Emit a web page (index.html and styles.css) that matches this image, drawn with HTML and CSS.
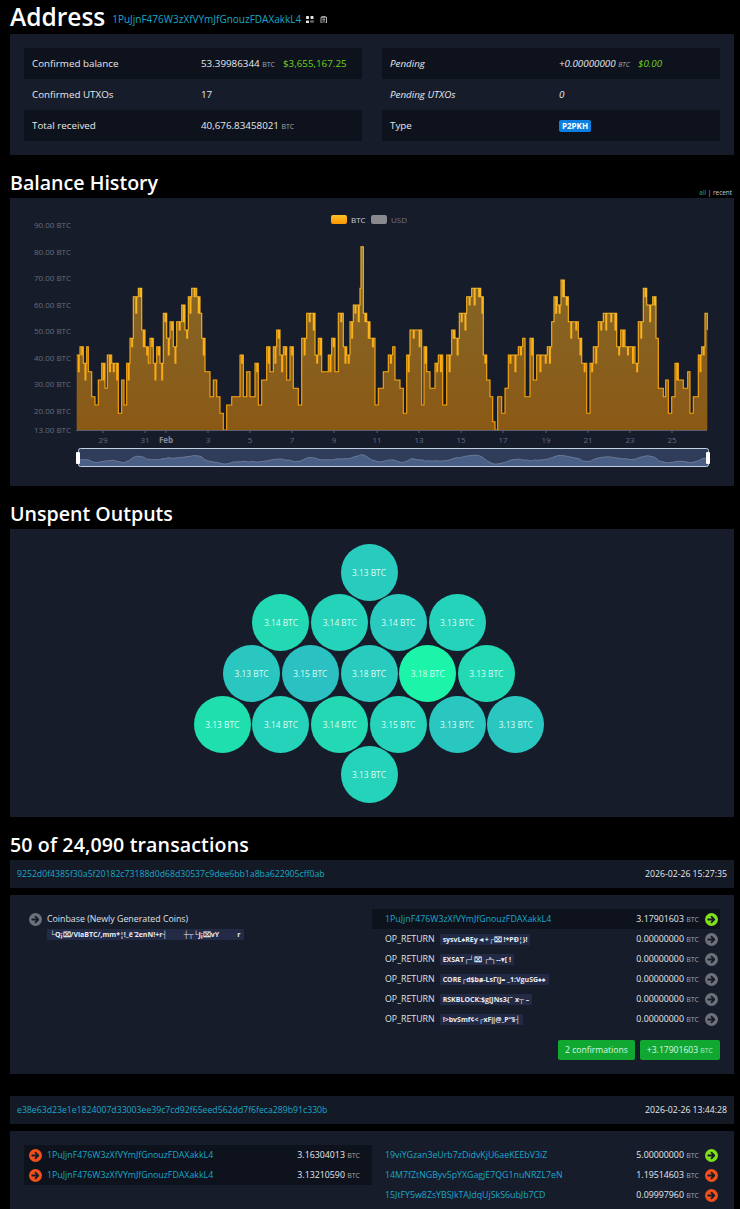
FILE: index.html
```html
<!DOCTYPE html>
<html lang="en">
<head>
    <meta charset="UTF-8">
    <meta name="viewport" content="width=device-width, initial-scale=1.0">
    <title>Address 1PuJjnF476W3zXfVYmJfGnouzFDAXakkL4</title>
    <link rel="stylesheet" href="styles.css">
</head>
<body>
    <svg class="icon-defs" aria-hidden="true">
        <symbol id="arrow" viewBox="0 0 16 16">
            <circle cx="8" cy="8" r="8" fill="currentColor"/>
            <path d="M4 8h7M8 4.6 11.4 8 8 11.4" fill="none" stroke="#171c2b" stroke-width="2.2" stroke-linecap="round" stroke-linejoin="round"/>
        </symbol>
    </svg>

    <!-- Address summary -->
    <div class="title-row">
        <h1>Address</h1>
        <a class="link title-address">1PuJjnF476W3zXfVYmJfGnouzFDAXakkL4</a>
        <svg class="title-icon qr" viewBox="0 0 10 10">
            <path d="M0 1a1 1 0 0 1 1-1h2a1 1 0 0 1 1 1v2a1 1 0 0 1-1 1H1a1 1 0 0 1-1-1zM6 1a1 1 0 0 1 1-1h2a1 1 0 0 1 1 1v2a1 1 0 0 1-1 1H7a1 1 0 0 1-1-1zM0 7a1 1 0 0 1 1-1h2a1 1 0 0 1 1 1v2a1 1 0 0 1-1 1H1a1 1 0 0 1-1-1zM6 6h1.5v1.5H6zM8.5 6H10v1.5H8.5zM6 8.5h1.5V10H6zM8.5 8.5H10V10H8.5z" fill="#e4e6ea"/>
        </svg>
        <svg class="title-icon copy" viewBox="0 0 10 11">
            <path d="M2.5 1.5H1v9h8v-9H7.5M3 .6h4v2H3zM3 5h4M3 7.4h4" fill="none" stroke="#e4e6ea" stroke-width="1.1"/>
        </svg>
    </div>
    <section class="panel summary">
        <div class="info-table">
            <div class="info-row shaded">
                <span class="info-label">Confirmed balance</span>
                <span>53.39986344 <small>BTC</small><b class="usd">$3,655,167.25</b></span>
            </div>
            <div class="info-row">
                <span class="info-label">Confirmed UTXOs</span>
                <span>17</span>
            </div>
            <div class="info-row shaded">
                <span class="info-label">Total received</span>
                <span>40,676.83458021 <small>BTC</small></span>
            </div>
        </div>
        <div class="info-table">
            <div class="info-row shaded pending">
                <span class="info-label">Pending</span>
                <span>+0.00000000 <small>BTC</small><b class="usd">$0.00</b></span>
            </div>
            <div class="info-row pending">
                <span class="info-label">Pending UTXOs</span>
                <span>0</span>
            </div>
            <div class="info-row shaded">
                <span class="info-label">Type</span>
                <span class="badge">P2PKH</span>
            </div>
        </div>
    </section>

    <!-- Balance history -->
    <div class="section-head">
        <h2>Balance History</h2>
        <span class="range"><a class="link">all</a> | recent</span>
    </div>
    <section class="panel chart-panel">
        <svg class="chart" viewBox="10 198 724 288">
            <defs>
                <linearGradient id="lineGrad" gradientUnits="userSpaceOnUse" x1="0" y1="250" x2="0" y2="430">
                    <stop offset="0" stop-color="#f6c030"/>
                    <stop offset="1" stop-color="#ffa000"/>
                </linearGradient>
                <linearGradient id="areaGrad" gradientUnits="userSpaceOnUse" x1="0" y1="250" x2="0" y2="430">
                    <stop offset="0" stop-color="#f0b428" stop-opacity="0.5"/>
                    <stop offset="1" stop-color="#ff9600" stop-opacity="0.5"/>
                </linearGradient>
                <linearGradient id="swatchGrad" x1="0" y1="0" x2="0" y2="1">
                    <stop offset="0" stop-color="#fbc02d"/>
                    <stop offset="1" stop-color="#ff9800"/>
                </linearGradient>
            </defs>

            <rect class="swatch" x="331" y="215" width="16" height="9" rx="2" fill="url(#swatchGrad)"/>
            <text class="legend-on" x="351" y="223">BTC</text>
            <rect class="swatch" x="371" y="215" width="16" height="9" rx="2" fill="#8a8a8e"/>
            <text class="legend-off" x="391" y="223">USD</text>

            <g class="axis-y">
                <text x="71" y="228">90.00 BTC</text>
                <text x="71" y="255">80.00 BTC</text>
                <text x="71" y="281">70.00 BTC</text>
                <text x="71" y="308">60.00 BTC</text>
                <text x="71" y="334">50.00 BTC</text>
                <text x="71" y="361">40.00 BTC</text>
                <text x="71" y="387">30.00 BTC</text>
                <text x="71" y="414">20.00 BTC</text>
                <text x="71" y="433">13.00 BTC</text>
            </g>

            <path id="area" fill="url(#areaGrad)"/>
            <path id="line" fill="none" stroke="url(#lineGrad)" stroke-width="1.1"/>
            <path class="axis-line" d="M76 430.5H707M103 430v3M145 430v3M166 430v3M208 430v3M250 430v3M292 430v3M334 430v3M377 430v3M419 430v3M461 430v3M503 430v3M546 430v3M588 430v3M630 430v3M672 430v3"/>

            <g class="axis-x">
                <text x="103" y="443">29</text>
                <text x="145" y="443">31</text>
                <text class="month" x="166" y="443">Feb</text>
                <text x="208" y="443">3</text>
                <text x="250" y="443">5</text>
                <text x="292" y="443">7</text>
                <text x="334" y="443">9</text>
                <text x="377" y="443">11</text>
                <text x="419" y="443">13</text>
                <text x="461" y="443">15</text>
                <text x="503" y="443">17</text>
                <text x="546" y="443">19</text>
                <text x="588" y="443">21</text>
                <text x="630" y="443">23</text>
                <text x="672" y="443">25</text>
            </g>

            <rect x="78.5" y="448.5" width="630" height="18" rx="2" fill="#2f3c5a"/>
            <path id="miniArea" fill="#4a5f85"/>
            <path id="miniLine" fill="none" stroke="#75839f" stroke-width="0.8"/>
            <rect x="78.5" y="448.5" width="630" height="18" rx="2" fill="none" stroke="#c5cde0"/>
            <rect x="76" y="452" width="4" height="12" rx="1" fill="#fff"/>
            <rect x="706" y="452" width="4" height="12" rx="1" fill="#fff"/>
        </svg>
    </section>

    <!-- Unspent outputs -->
    <div class="section-head">
        <h2>Unspent Outputs</h2>
    </div>
    <section class="panel utxo-panel">
        <div class="utxo-row">
            <span class="utxo tone-c">3.13 BTC</span>
        </div>
        <div class="utxo-row">
            <span class="utxo tone-a">3.14 BTC</span>
            <span class="utxo tone-b">3.14 BTC</span>
            <span class="utxo tone-c">3.14 BTC</span>
            <span class="utxo tone-b">3.13 BTC</span>
        </div>
        <div class="utxo-row">
            <span class="utxo tone-d">3.13 BTC</span>
            <span class="utxo tone-e">3.15 BTC</span>
            <span class="utxo tone-c">3.18 BTC</span>
            <span class="utxo tone-hot">3.18 BTC</span>
            <span class="utxo tone-a">3.13 BTC</span>
        </div>
        <div class="utxo-row">
            <span class="utxo tone-top">3.13 BTC</span>
            <span class="utxo tone-b">3.14 BTC</span>
            <span class="utxo tone-a">3.14 BTC</span>
            <span class="utxo tone-b">3.15 BTC</span>
            <span class="utxo tone-d">3.13 BTC</span>
            <span class="utxo tone-d">3.13 BTC</span>
        </div>
        <div class="utxo-row">
            <span class="utxo tone-b">3.13 BTC</span>
        </div>
    </section>

    <!-- Transactions -->
    <div class="section-head">
        <h2 class="tx-title">50 of 24,090 transactions</h2>
    </div>

    <div class="tx-head">
        <a class="link">9252d0f4385f30a5f20182c73188d0d68d30537c9dee6bb1a8ba622905cff0ab</a>
        <span>2026-02-26 15:27:35</span>
    </div>
    <section class="panel tx-body">
        <div class="tx-columns">
            <div>
                <div class="io-row">
                    <svg class="arrow gray"><use href="#arrow"/></svg>
                    <span class="io-name">Coinbase (Newly Generated Coins)</span>
                </div>
                <div class="coinbase-script"><span class="script">└Q¡⌧/ViaBTC/,mm*¦!_ë ̈2enN!+r┤&nbsp;&nbsp;&nbsp;&nbsp;&nbsp;&nbsp;&nbsp;&nbsp;&nbsp;┼┬└J¡⌧vY&nbsp;&nbsp;&nbsp;&nbsp;&nbsp;&nbsp;&nbsp;&nbsp;&nbsp;&nbsp;r</span></div>
            </div>
            <div>
                <div class="io-row out shaded">
                    <a class="link">1PuJjnF476W3zXfVYmJfGnouzFDAXakkL4</a>
                    <span class="amount">3.17901603 <small>BTC</small></span>
                    <svg class="arrow lime"><use href="#arrow"/></svg>
                </div>
                <div class="io-row out">
                    <span class="io-name">OP_RETURN</span><span class="script">sysvL♠REy◄+┌⌧ !*PÐ¦}!</span>
                    <span class="amount">0.00000000 <small>BTC</small></span>
                    <svg class="arrow gray"><use href="#arrow"/></svg>
                </div>
                <div class="io-row out">
                    <span class="io-name">OP_RETURN</span><span class="script">EXSAT┌┘⌧ ┌ª┐--▾[ !</span>
                    <span class="amount">0.00000000 <small>BTC</small></span>
                    <svg class="arrow gray"><use href="#arrow"/></svg>
                </div>
                <div class="io-row out">
                    <span class="io-name">OP_RETURN</span><span class="script">CORE┌d$bⱥ‑LsΓ(j= _1:VguSG♠♠</span>
                    <span class="amount">0.00000000 <small>BTC</small></span>
                    <svg class="arrow gray"><use href="#arrow"/></svg>
                </div>
                <div class="io-row out">
                    <span class="io-name">OP_RETURN</span><span class="script">RSKBLOCK:$g[JN‍s3{ˆ x┬ –</span>
                    <span class="amount">0.00000000 <small>BTC</small></span>
                    <svg class="arrow gray"><use href="#arrow"/></svg>
                </div>
                <div class="io-row out">
                    <span class="io-name">OP_RETURN</span><span class="script">!&gt;bvSmf¢&lt;┌xF‖@_Pˮ§┤</span>
                    <span class="amount">0.00000000 <small>BTC</small></span>
                    <svg class="arrow gray"><use href="#arrow"/></svg>
                </div>
            </div>
        </div>
        <div class="tx-footer">
            <span class="tx-tag">2 confirmations</span>
            <span class="tx-tag">+3.17901603 <small>BTC</small></span>
        </div>
    </section>

    <div class="tx-head second">
        <a class="link">e38e63d23e1e1824007d33003ee39c7cd92f65eed562dd7f6feca289b91c330b</a>
        <span>2026-02-26 13:44:28</span>
    </div>
    <section class="panel tx-body">
        <div class="tx-columns">
            <div class="tx-inputs">
                <div class="io-row">
                    <svg class="arrow red"><use href="#arrow"/></svg>
                    <a class="link">1PuJjnF476W3zXfVYmJfGnouzFDAXakkL4</a>
                    <span class="amount">3.16304013 <small>BTC</small></span>
                </div>
                <div class="io-row">
                    <svg class="arrow red"><use href="#arrow"/></svg>
                    <a class="link">1PuJjnF476W3zXfVYmJfGnouzFDAXakkL4</a>
                    <span class="amount">3.13210590 <small>BTC</small></span>
                </div>
            </div>
            <div>
                <div class="io-row out">
                    <a class="link">19viYGzan3eUrb7zDidvKjU6aeKEEbV3iZ</a>
                    <span class="amount">5.00000000 <small>BTC</small></span>
                    <svg class="arrow lime"><use href="#arrow"/></svg>
                </div>
                <div class="io-row out">
                    <a class="link">14M7fZtNGByv5pYXGagjE7QG1nuNRZL7eN</a>
                    <span class="amount">1.19514603 <small>BTC</small></span>
                    <svg class="arrow red"><use href="#arrow"/></svg>
                </div>
                <div class="io-row out">
                    <a class="link">15JtFY5w8ZsYBSJkTAJdqUjSkS6ubJb7CD</a>
                    <span class="amount">0.09997960 <small>BTC</small></span>
                    <svg class="arrow red"><use href="#arrow"/></svg>
                </div>
            </div>
        </div>
    </section>

    <script src="chart.js"></script>
</body>
</html>
```

FILE: styles.css
```css
* {
    box-sizing: border-box;
}
html, body {
    height: 1209px;
    overflow: hidden;
}
body {
    margin: 0;
    padding: 0 6px 0 10px;
    background-color: #000;
    color: #e6e8ec;
    font-family: "Open Sans", "Noto Sans", Arial, sans-serif;
    font-size: 9.8px;
}
small {
    font-size: 7px;
    color: #a0a4ae;
}
.link {
    color: #1ba8c8;
}
.icon-defs {
    display: none;
}

/* headings */
.title-row {
    display: flex;
    align-items: center;
    height: 34px;
}
h1 {
    margin: 0 7px 0 0;
    font-size: 24.5px;
    font-weight: 600;
    line-height: 30px;
    color: #fff;
}
.title-address {
    font-size: 10px;
    margin-top: 4px;
}
.title-icon {
    width: 7.5px;
    height: 7.5px;
    margin-top: 5px;
}
.title-icon.qr {
    margin-left: 5px;
}
.title-icon.copy {
    margin-left: 6.5px;
}
.section-head {
    display: flex;
    justify-content: space-between;
    align-items: flex-end;
    height: 43px;
    padding-right: 2px;
}
h2 {
    margin: 0;
    font-size: 19.6px;
    font-weight: 600;
    line-height: 27px;
    color: #fff;
    padding-bottom: 2px;
}
.tx-title {
    letter-spacing: 0.12px;
}
.range {
    font-size: 6.4px;
    color: #c8cad0;
    padding-bottom: 1px;
}

/* panels */
.panel {
    background-color: #171c2b;
}
.summary {
    display: grid;
    grid-template-columns: 1fr 1fr;
    column-gap: 20px;
    padding: 14px;
}
.info-row {
    display: grid;
    grid-template-columns: 169px 1fr;
    align-items: center;
    height: 31px;
    padding-left: 8px;
}
.shaded {
    background-color: #0d121d;
}
.pending {
    font-style: italic;
}
.usd {
    font-weight: 400;
    color: #6fd41c;
    margin-left: 8px;
}
.badge {
    justify-self: start;
    padding: 0 3px;
    border-radius: 2px;
    background-color: #0c7fe0;
    color: #fff;
    font-size: 8px;
    font-weight: 700;
    line-height: 12px;
}

/* chart */
.chart-panel, .utxo-panel {
    height: 288px;
}
.chart {
    display: block;
    width: 724px;
    height: 288px;
}
.chart text {
    font-size: 8px;
}
.legend-on {
    fill: #c9ccd3;
}
.legend-off {
    fill: #6c7180;
}
.axis-y text {
    fill: #656b7a;
    text-anchor: end;
}
.axis-x text {
    fill: #656b7a;
    text-anchor: middle;
}
.axis-x .month {
    font-weight: 700;
    fill: #858a96;
}
.axis-line {
    fill: none;
    stroke: #5a5f6c;
    stroke-width: 1;
}

/* unspent outputs */
.utxo-panel {
    padding-top: 14.5px;
}
.utxo-row {
    display: flex;
    justify-content: center;
    gap: 1.7px;
    margin-bottom: -6.3px;
    padding-right: 6px;
}
.utxo {
    display: flex;
    align-items: center;
    justify-content: center;
    width: 57px;
    height: 57px;
    border-radius: 50%;
    color: #dffcf4;
    font-size: 8.4px;
    white-space: nowrap;
}
.tone-top {
    background-color: #20dfae;
}
.tone-a {
    background-color: #22d9b4;
}
.tone-b {
    background-color: #25d2ba;
}
.tone-c {
    background-color: #29cbbf;
}
.tone-d {
    background-color: #2ac6c0;
}
.tone-e {
    background-color: #2bc0c2;
}
.tone-hot {
    background-color: #1cf5a9;
}

/* transactions */
.tx-head {
    display: flex;
    justify-content: space-between;
    align-items: center;
    height: 28px;
    padding: 0 7px;
    background-color: #141926;
    font-size: 8.7px;
}
.tx-head.second {
    margin-top: 22px;
}
.tx-body {
    margin-top: 7px;
    padding: 14px;
    font-size: 8.8px;
}
.tx-columns {
    display: grid;
    grid-template-columns: 1fr 1fr;
}
.tx-inputs {
    align-self: start;
    background-color: #0d121d;
}
.io-row {
    display: flex;
    align-items: center;
    height: 20px;
    white-space: nowrap;
}
.io-row.out {
    padding-left: 13px;
    padding-right: 2px;
}
.io-row .arrow:first-child {
    margin-left: 5px;
    margin-right: 5px;
}
.arrow {
    flex: none;
    width: 13px;
    height: 13px;
}
.gray {
    color: #6e7079;
}
.lime {
    color: #7fe018;
}
.red {
    color: #f0501a;
}
.amount {
    margin-left: auto;
}
.tx-inputs .amount {
    padding-right: 12px;
}
.out .amount {
    margin-right: 6px;
}
.io-name {
    color: #dfe2e7;
}
.script {
    display: inline-block;
    margin-left: 5px;
    padding: 0 3px;
    border-radius: 1px;
    background-color: #222a45;
    color: #e8eaf2;
    font-family: "Open Sans", "Noto Sans", sans-serif;
    font-size: 7px;
    font-weight: 700;
    line-height: 11px;
}
.coinbase-script {
    margin-top: -1px;
    padding-left: 18px;
}
.tx-footer {
    display: flex;
    justify-content: flex-end;
    gap: 5px;
    margin-top: 11px;
}
.tx-tag {
    display: flex;
    align-items: center;
    gap: 2px;
    height: 20px;
    padding: 0 7px;
    border-radius: 2px;
    background-color: #11a832;
    color: #dff5e2;
    font-size: 8.6px;
}
.tx-tag small {
    color: #b5e4bf;
}
```

FILE: chart.js
```js
// balance points read off as [x, y] in zoomed chart units, split at the middle of the plot
const leftPoints = [[230,465],[240,440],[250,490],[260,440],[265,515],[275,590],[285,615],[295,540],[305,490],[315,565],[322,465],[335,490],[345,490],[355,640],[365,540],[372,615],[380,490],[390,415],[400,290],[415,265],[425,390],[435,440],[445,490],[450,415],[460,490],[470,440],[480,490],[490,340],[500,415],[510,365],[520,440],[530,365],[545,315],[555,390],[565,290],[575,265],[590,290],[600,340],[605,415],[615,515],[630,590],[640,540],[650,590],[660,640],[670,690],[680,615],[695,590],[720,465],[730,590],[740,515],[750,590],[765,490],[775,615],[785,540],[800,440],[810,515],[820,440],[830,390],[840,465],[850,440],[860,540],[870,440],[880,565],[895,615],[905,415],[920,340],[935,340],[945,465],[955,415],[965,515],[985,465],[995,415],[1005,515],[1015,340],[1030,440],[1040,465],[1050,365],[1060,315],[1070,315],[1080,265],[1083,140],[1090,340],[1100,365]];
const rightPoints = [[0,415],[15,615],[25,565],[40,515],[55,465],[68,440],[75,540],[90,565],[100,640],[110,465],[120,390],[140,390],[155,615],[162,440],[170,515],[180,565],[195,490],[205,465],[218,615],[230,465],[245,390],[255,415],[268,340],[280,340],[290,290],[305,265],[320,265],[332,290],[340,465],[350,540],[360,590],[368,665],[375,690],[383,590],[395,640],[405,565],[415,465],[425,465],[445,440],[458,415],[465,590],[480,415],[490,540],[500,465],[520,465],[532,440],[545,365],[552,290],[562,315],[573,240],[583,290],[595,365],[610,365],[625,415],[635,490],[650,640],[660,490],[670,440],[685,365],[700,340],[715,340],[730,340],[740,440],[752,390],[765,440],[780,440],[795,490],[805,365],[820,265],[830,315],[848,290],[858,415],[865,565],[880,590],[887,540],[895,640],[905,590],[915,490],[925,540],[940,565],[953,515],[960,640],[970,590],[985,465],[995,440],[1005,340],[1012,390]];

const points = [
    ...leftPoints.map(p => [p[0] / 3, 200 + p[1] / 3]),
    ...rightPoints.map(p => [370 + p[0] / 3, 200 + p[1] / 3])
];

// step line: narrow dips inside the wider steps, only on the higher balances
function buildSteps(list) {
    const steps = [];
    list.forEach((p, i) => {
        steps.push(p);
        const next = list[i + 1];
        if (next && next[0] - p[0] > 2.5 && p[1] < 365) {
            const mid = p[0] + (next[0] - p[0]) / 2;
            const depth = i % 2 === 0 ? 16.6 : 8.3;
            steps.push([mid, p[1] + depth]);
            steps.push([mid + 0.9, p[1]]);
        }
    });
    return steps;
}

function stepPath(list) {
    let d = 'M' + list[0][0].toFixed(1) + ' ' + list[0][1].toFixed(1);
    for (let i = 1; i < list.length; i++) {
        d += 'H' + list[i][0].toFixed(1) + 'V' + list[i][1].toFixed(1);
    }
    return d;
}

const steps = buildSteps(points);
const mainPath = stepPath(steps);
document.getElementById('line').setAttribute('d', mainPath);
document.getElementById('area').setAttribute('d', mainPath + 'V430H' + steps[0][0].toFixed(1) + 'Z');

// overview under the chart: same balances, averaged and flattened
const lastX = steps[steps.length - 1][0];
const miniPoints = points.map((p, i) => {
    const near = points.slice(Math.max(0, i - 1), i + 2);
    const avg = near.reduce((sum, q) => sum + q[1], 0) / near.length;
    return [79 + (p[0] - 76.7) * (629 / (lastX - 76.7)), 465 - (430 - avg) * 0.07];
});
const miniPath = 'M' + miniPoints.map(p => p[0].toFixed(1) + ' ' + p[1].toFixed(1)).join('L');
document.getElementById('miniLine').setAttribute('d', miniPath);
document.getElementById('miniArea').setAttribute('d', miniPath + 'V466H79Z');
```
